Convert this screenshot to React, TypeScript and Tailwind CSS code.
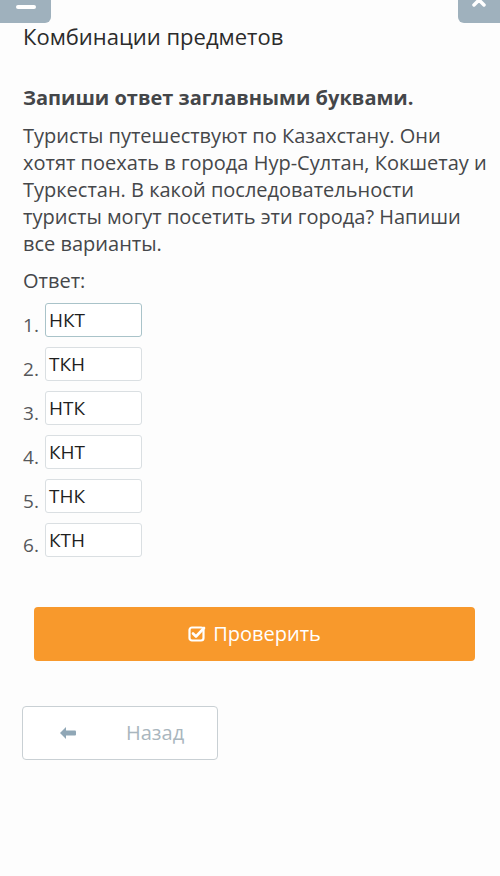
const answers = ["НКТ", "ТКН", "НТК", "КНТ", "ТНК", "КТН"];

export default function App() {
	return (
		<div className="relative w-[500px] h-[876px] bg-[#fdfdfd] overflow-hidden" style={{ fontFamily: '"Open Sans", "Noto Sans", sans-serif' }}>
			<div className="absolute left-0 top-0 w-[51px] h-[23px] bg-[#9fb1bd] rounded-br-md flex items-center justify-center">
				<div className="w-[20px] h-[4px] bg-white rounded-sm -mt-[10px]" />
			</div>
			<div className="absolute right-0 top-0 w-[42px] h-[23px] bg-[#9fb1bd] rounded-bl-md flex items-start justify-center">
				<svg width="16" height="10" viewBox="0 0 16 10" className="-mt-[1px]">
					<path d="M3 -4 L13 6 M13 -4 L3 6" stroke="white" strokeWidth="3.5" strokeLinecap="round" />
				</svg>
			</div>

			<div className="pl-[23px] pr-[12px] pt-[21px]">
				<h1 className="text-[22px] leading-[30px] text-[#2b2b2b]">Комбинации предметов</h1>
				<p className="mt-[33px] text-[20px] leading-[28px] font-bold text-[#444649]">Запиши ответ заглавными буквами.</p>
				<p className="mt-[10px] text-[20px] leading-[27px] text-[#45474a]">
					Туристы путешествуют по Казахстану. Они хотят поехать в города Нур-Султан, Кокшетау и Туркестан. В какой последовательности туристы могут посетить эти города? Напиши все варианты.
				</p>
				<p className="mt-[10px] text-[20px] leading-[27px] text-[#45474a]">Ответ:</p>
				<div className="mt-[9px] flex flex-col gap-[10px]">
					{answers.map((a, i) => (
						<div key={i} className="flex items-end gap-[3px]">
							<span className="w-[19px] text-[19px] leading-[24px] text-[#55575a]">{i + 1}.</span>
							<div className={`w-[97px] h-[34px] rounded-[3px] border ${i === 0 ? "border-[#a9c3c9]" : "border-[#dadfe2]"} bg-white px-[3px] flex items-center text-[19px] text-[#1f1f1f]`}>
								{a}
							</div>
						</div>
					))}
				</div>
			</div>

			<div className="pl-[34px] pr-[25px] mt-[50px]">
				<div className="h-[54px] rounded-[4px] bg-[#f8992c] flex items-center justify-center gap-[7px] text-white text-[20px]">
					<svg width="18" height="18" viewBox="0 0 18 18">
						<rect x="1.5" y="2.5" width="14" height="13" rx="2.5" fill="none" stroke="white" strokeWidth="2.2" />
						<path d="M5 8.5 L8 11.5 L16 3" fill="none" stroke="white" strokeWidth="2.6" strokeLinecap="round" strokeLinejoin="round" />
					</svg>
					<span>Проверить</span>
				</div>
			</div>

			<div className="px-[22px] mt-[45px]">
				<div className="w-[196px] h-[54px] rounded-[4px] border border-[#c9d0d4] bg-white flex items-center pl-[35px] text-[#a9b6be] text-[20px]">
					<svg width="20" height="16" viewBox="0 0 20 16">
						<path d="M8 2 L2 8 L8 14 Z" fill="#90a7b6" />
						<rect x="6" y="5.5" width="12" height="5" rx="1" fill="#90a7b6" />
					</svg>
					<span className="ml-[48px]">Назад</span>
				</div>
			</div>
		</div>
	);
}
